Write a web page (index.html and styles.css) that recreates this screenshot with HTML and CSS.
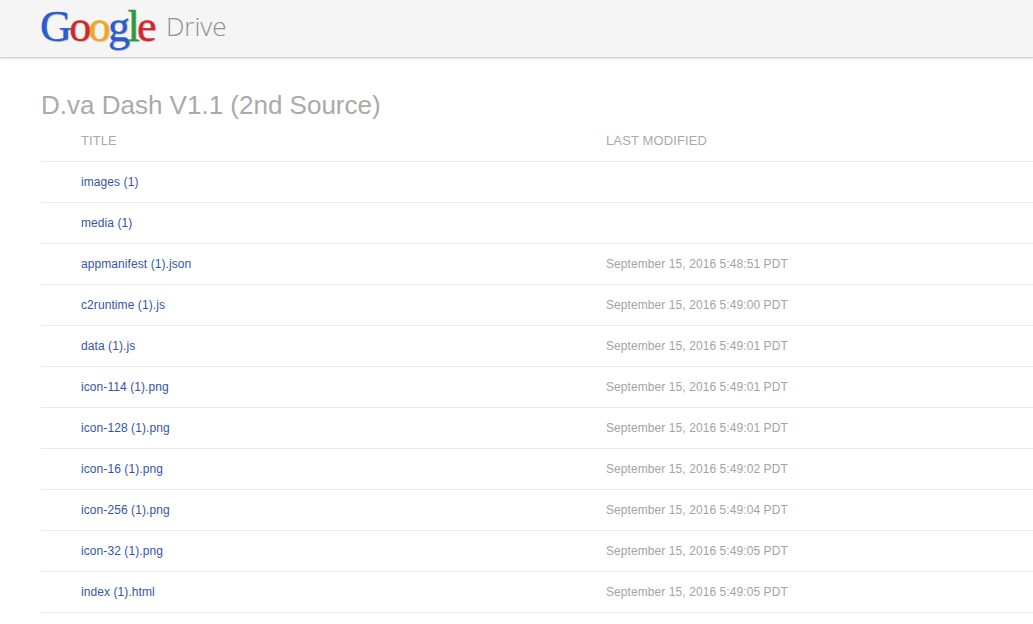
FILE: index.html
```html
<!DOCTYPE html>
<html lang="en">
<head>
<meta charset="utf-8">
<title>D.va Dash V1.1 (2nd Source) - Google Drive</title>
<link rel="stylesheet" href="styles.css">
</head>
<body>
<header class="topbar">
  <div class="logo"><span class="g-blue">G</span><span class="g-red">o</span><span class="g-yellow">o</span><span class="g-blue">g</span><span class="g-green">l</span><span class="g-red">e</span></div>
  <div class="product">Drive</div>
</header>
<main class="content">
  <h1 class="folder-title">D.va Dash V1.1 (2nd Source)</h1>
  <div class="row head"><div class="name">TITLE</div><div class="date">LAST MODIFIED</div></div>
  <div class="row"><a class="name" href="#">images (1)</a><div class="date"></div></div>
  <div class="row"><a class="name" href="#">media (1)</a><div class="date"></div></div>
  <div class="row"><a class="name" href="#">appmanifest (1).json</a><div class="date">September 15, 2016 5:48:51 PDT</div></div>
  <div class="row"><a class="name" href="#">c2runtime (1).js</a><div class="date">September 15, 2016 5:49:00 PDT</div></div>
  <div class="row"><a class="name" href="#">data (1).js</a><div class="date">September 15, 2016 5:49:01 PDT</div></div>
  <div class="row"><a class="name" href="#">icon-114 (1).png</a><div class="date">September 15, 2016 5:49:01 PDT</div></div>
  <div class="row"><a class="name" href="#">icon-128 (1).png</a><div class="date">September 15, 2016 5:49:01 PDT</div></div>
  <div class="row"><a class="name" href="#">icon-16 (1).png</a><div class="date">September 15, 2016 5:49:02 PDT</div></div>
  <div class="row"><a class="name" href="#">icon-256 (1).png</a><div class="date">September 15, 2016 5:49:04 PDT</div></div>
  <div class="row"><a class="name" href="#">icon-32 (1).png</a><div class="date">September 15, 2016 5:49:05 PDT</div></div>
  <div class="row"><a class="name" href="#">index (1).html</a><div class="date">September 15, 2016 5:49:05 PDT</div></div>
</main>
</body>
</html>
```
FILE: styles.css
```css
html, body {
  margin: 0;
  padding: 0;
  background: #fff;
  overflow: hidden;
}
body {
  font-family: "Liberation Sans", Arial, sans-serif;
}
.topbar {
  height: 58px;
  box-sizing: border-box;
  background: #f5f5f5;
  border-bottom: 1px solid #d6d6d6;
  box-shadow: 0 1px 2px rgba(0, 0, 0, 0.12);
  display: flex;
  align-items: flex-start;
  padding-left: 40px;
}
.logo {
  font-family: "Liberation Serif", serif;
  font-weight: 400;
  font-size: 44px;
  line-height: 54px;
  letter-spacing: -2.6px;
  -webkit-text-stroke: 0.4px;
  text-shadow: 1px 1px 1px rgba(0, 0, 0, 0.2);
}
.g-blue { color: #2a5bd0; }
.g-red { color: #d3262b; }
.g-yellow { color: #efa81c; }
.g-green { color: #2b9a3c; }
.product {
  font-family: "Open Sans", sans-serif;
  font-weight: 300;
  font-size: 26px;
  line-height: 52px;
  color: #8f9298;
  margin-left: 12px;
}
.content {
  padding-left: 41px;
}
.folder-title {
  margin: 0;
  padding-top: 32px;
  font-size: 26px;
  line-height: 30px;
  font-weight: 400;
  color: #aaaaaa;
}
.row {
  display: flex;
  height: 41px;
  box-sizing: border-box;
  border-bottom: 1px solid #ebebeb;
  font-size: 12px;
  letter-spacing: 0.08px;
  align-items: center;
}
.row.head {
  height: 42px;
  font-size: 13px;
  color: #aaaaaa;
  padding-bottom: 1px;
}
.name {
  width: 525px;
  margin-left: 40px;
  flex: none;
  text-decoration: none;
  color: #3355ab;
}
.head .name { color: #aaaaaa; }
.date {
  color: #a3a3a3;
}
.head .date { color: #aaaaaa; letter-spacing: 0.13px; }
```
